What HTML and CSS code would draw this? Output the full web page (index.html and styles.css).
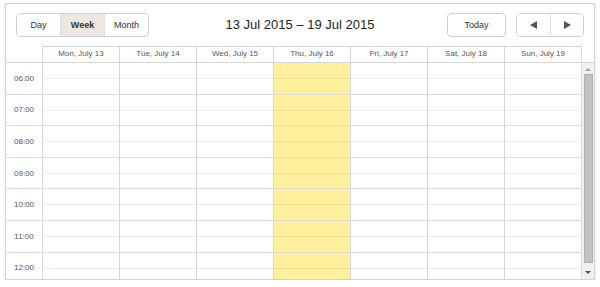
FILE: index.html
```html
<!DOCTYPE html>
<html lang="en">
<head>
    <meta charset="UTF-8">
    <title>Week calendar</title>
    <link rel="stylesheet" href="styles.css">
</head>
<body>
    <div class="calendar">
        <div class="toolbar">
            <div class="left">
                <div class="group">
                    <a class="btn">Day</a>
                    <a class="btn active">Week</a>
                    <a class="btn">Month</a>
                </div>
            </div>
            <div class="title">13 Jul 2015 – 19 Jul 2015</div>
            <div class="right">
                <a class="btn single">Today</a>
                <div class="group nav">
                    <a class="btn"><span class="tri prev"></span></a>
                    <a class="btn"><span class="tri next"></span></a>
                </div>
            </div>
        </div>

        <div class="head">
            <div class="cell corner"></div>
            <div class="cell">Mon, July 13</div>
            <div class="cell">Tue, July 14</div>
            <div class="cell">Wed, July 15</div>
            <div class="cell">Thu, July 16</div>
            <div class="cell">Fri, July 17</div>
            <div class="cell">Sat, July 18</div>
            <div class="cell">Sun, July 19</div>
        </div>

        <div class="main">
            <div class="grid" id="grid"></div>
            <div class="scrollbar">
                <span class="arrow up"></span>
                <span class="thumb"></span>
                <span class="arrow down"></span>
            </div>
        </div>
    </div>

    <script>
        const hours = ['06:00', '07:00', '08:00', '09:00', '10:00', '11:00', '12:00'];
        const today = 3;
        const grid = document.getElementById('grid');

        for (let h of hours) {
            const row = document.createElement('div');
            row.className = 'hour';

            const label = document.createElement('div');
            label.className = 'time';
            label.textContent = h;
            row.appendChild(label);

            for (let d = 0; d < 7; d++) {
                const slot = document.createElement('div');
                slot.className = d === today ? 'day today' : 'day';
                row.appendChild(slot);
            }

            grid.appendChild(row);
        }
    </script>
</body>
</html>
```

FILE: styles.css
```css
:root {
    --line: #d6d6d6;
    --hour-line: #dcdcdc;
    --half-line: rgba(0, 0, 0, 0.065);
    --text: #555;
    --today: #fef09c;
}

html, body {
    margin: 0;
    padding: 0;
    background: #fff;
    font-family: "Liberation Sans", Arial, sans-serif;
    color: var(--text);
}

.calendar {
    margin: 3px 5px 0 5px;
    height: 277px;
    box-sizing: border-box;
    border: 1px solid #d2d2d2;
    box-shadow: 0 1px 3px rgba(0, 0, 0, 0.12);
    display: flex;
    flex-direction: column;
    overflow: hidden;
}

.toolbar {
    height: 42px;
    flex: none;
    padding: 9px 10px 0 10px;
    box-sizing: border-box;
    display: grid;
    grid-template-columns: 1fr auto 1fr;
    align-items: start;
}

.left { display: flex; }
.right { display: flex; justify-content: flex-end; gap: 10px; }

.title {
    font-size: 13px;
    color: #222;
    line-height: 24px;
}

.group {
    display: flex;
    border: 1px solid #cfcfcf;
    border-radius: 4px;
    overflow: hidden;
    height: 24px;
    box-sizing: border-box;
}

.btn {
    width: 43px;
    display: flex;
    align-items: center;
    justify-content: center;
    font-size: 9px;
    color: #333;
    background: #fff;
    border-right: 1px solid #dedede;
    cursor: pointer;
}

.group .btn:last-child { border-right: 0; }

.btn.active {
    background: #ece8e1;
    font-weight: bold;
}

.btn.single {
    width: 59px;
    height: 24px;
    box-sizing: border-box;
    border: 1px solid #cfcfcf;
    border-radius: 4px;
}

.nav .btn { width: 33px; }
.nav .btn:last-child { width: 32px; }

.tri {
    width: 0;
    height: 0;
    border-top: 4px solid transparent;
    border-bottom: 4px solid transparent;
}
.tri.prev { border-right: 7px solid #555; }
.tri.next { border-left: 7px solid #555; }

.head {
    flex: none;
    display: grid;
    grid-template-columns: 37px repeat(7, 77px) 1fr;
    height: 16px;
    border-bottom: 1px solid var(--line);
}

.head .cell {
    box-sizing: border-box;
    border-top: 1px solid var(--line);
    border-right: 1px solid var(--line);
    font-size: 8px;
    line-height: 14px;
    text-align: center;
}

.head .corner { border-top: 0; }

.main {
    flex: 1;
    display: flex;
    min-height: 0;
}

.grid {
    flex: 1;
    overflow: hidden;
}

.hour {
    display: grid;
    grid-template-columns: 37px repeat(7, 77px);
    height: 31.6px;
    box-sizing: border-box;
    border-bottom: 1px solid var(--hour-line);
}

.time {
    border-right: 1px solid var(--line);
    font-size: 8px;
    display: flex;
    align-items: center;
    justify-content: center;
}

.day {
    border-right: 1px solid var(--line);
    position: relative;
}

.day::after {
    content: "";
    position: absolute;
    left: 0;
    right: 0;
    top: 15px;
    border-top: 1px solid var(--half-line);
}

.day.today { background: var(--today); }

.scrollbar {
    width: 12px;
    flex: none;
    background: #f0f0f0;
    display: flex;
    flex-direction: column;
    align-items: center;
}

.arrow {
    width: 0;
    height: 0;
    border-left: 3px solid transparent;
    border-right: 3px solid transparent;
}
.arrow.up {
    margin-top: 5px;
    border-bottom: 3px solid #a3a3a3;
}
.arrow.down {
    margin-top: 8px;
    border-top: 3px solid #505050;
}

.thumb {
    margin-top: 3px;
    width: 9px;
    height: 189px;
    background: #c1c1c1;
    border: 1px solid #b0b0b0;
    box-sizing: border-box;
}
```
